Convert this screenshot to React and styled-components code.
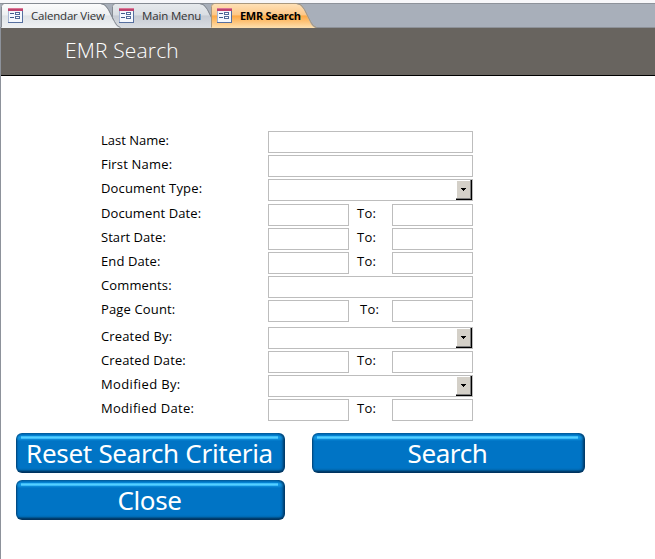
import React from 'react';
import styled, { createGlobalStyle, css } from 'styled-components';

const Global = createGlobalStyle`
  * { box-sizing: border-box; }
  body { margin: 0; background: #fff; overflow: hidden; }
`;

const Window = styled.main`
  width: 655px;
  height: 559px;
  display: flex;
  flex-direction: column;
  border-left: 1px solid #8d929b;
  background: #fff;
  font-family: 'Open Sans', 'Noto Sans', sans-serif;
  color: #000;
`;

const TabBar = styled.nav`
  height: 28px;
  flex: none;
  display: flex;
  margin-left: -1px;
  padding-left: 1px;
  border-top: 3px solid #f7f7fa;
  background: linear-gradient(#8d929a 0 1px, #a8afba 1px 24px, #8d9198 24px);
`;

const Tab = styled.div`
  position: relative;
  z-index: ${(p) => p.$level};
  width: ${(p) => p.$width}px;
  height: 25px;
  display: flex;
  padding: 5px 0 0 ${(p) => p.$pad}px;
  flex: none;
`;

const TabShape = styled.svg`
  position: absolute;
  left: 0;
  top: 0;
  overflow: visible;
`;

const FormIcon = styled.svg`
  position: relative;
  flex: none;
  width: 15px;
  height: 15px;
`;

const TabLabel = styled.span`
  position: relative;
  margin: -1px 0 0 ${(p) => p.$gap}px;
  font-size: 11.5px;
  line-height: 17px;
  white-space: nowrap;
  color: #333;
  letter-spacing: ${(p) => p.$spacing}px;
  ${(p) => p.$active && css`
    color: #000;
    font-size: 11px;
    font-weight: 700;
  `}
`;

const Header = styled.header`
  height: 48px;
  flex: none;
  padding: 8px 0 0 64px;
  background: #68645f;
  border-bottom: 1px solid #000;
`;

const Title = styled.h1`
  margin: 0;
  font-size: 21px;
  font-weight: 300;
  line-height: 29px;
  letter-spacing: 0.15px;
  color: #fff;
`;

const Form = styled.form`
  display: flex;
  flex-direction: column;
  gap: 2px;
  padding: 55px 0 0 100px;
`;

const Row = styled.div`
  display: grid;
  grid-template-columns: 167px 205px;
  height: 22px;
  margin-top: ${(p) => p.$before || 0}px;
`;

const Label = styled.label`
  font-size: 13px;
  line-height: 18px;
  white-space: nowrap;
  letter-spacing: ${(p) => p.$spacing || 0}px;
`;

const Field = styled.input`
  width: 100%;
  height: 22px;
  border: 1px solid #bdbdbd;
  border-radius: 0;
  background: #fff;
  padding: 0 3px;
  outline: 0;
`;

const Range = styled.div`
  display: grid;
  grid-template-columns: 81px 43px 81px;
`;

const To = styled(Label)`
  padding-left: ${(p) => p.$inset}px;
`;

const Combo = styled.div`
  display: flex;
  justify-content: flex-end;
  height: 22px;
  border: 1px solid #bdbdbd;
`;

const DropButton = styled.button`
  width: 16px;
  height: 20px;
  padding: 0;
  display: flex;
  border: solid #000;
  border-width: 0 1px 1px 0;
  background: #d4d0c8;
  box-shadow: inset -1px -1px #808080, inset 1px 1px #fff;
`;

const Actions = styled.div`
  display: grid;
  grid-template-columns: 269px 273px;
  grid-auto-rows: 40px;
  gap: 7px 27px;
  padding: 12px 0 0 15px;
`;

const Action = styled.button`
  border: 0;
  padding: 0 2px 0 0;
  border-radius: 6px;
  color: #fff;
  font-family: 'Noto Sans', 'Open Sans', sans-serif;
  font-size: 26px;
  line-height: 40px;
  letter-spacing: ${(p) => p.$spacing}px;
  white-space: nowrap;
  background:
    linear-gradient(#2fb0f5, #55d0ff 50%, #2fb0f5) 5px 3px / calc(100% - 12px) 3px no-repeat,
    linear-gradient(#0063a8 0, #0079c8 2px, #139bea 4px, #0e8fdc 6px, #0074c5 8px, #0074c5 35px, #0067af 37px, #004678 38px, #002e55 40px);
  box-shadow: inset 2px 0 2px -1px #003f70, inset -3px 0 3px -1px #00335e;
`;

const tabStyles = {
  plain: { colors: ['#e6e9ec', '#dadee3', '#c6cbd3', '#d9dde2'], stroke: '#858a92' },
  first: { colors: ['#fbfbfc', '#eef0f2', '#dfe3e7', '#eff1f3'], stroke: '#858a92' },
  active: { colors: ['#fee0b6', '#fdc888', '#fda945', '#fee0b0'], stroke: '#a9987e' },
};

function DocumentTab({ id, kind, width, pad, gap, spacing, curve, level, active, children }) {
  const s = tabStyles[kind];
  const d = `M0 25V4Q0 1 3 1H${curve - 3}Q${curve + 2} 1 ${curve + 5} 7L${curve + 11} 19Q${curve + 13} 24 ${curve + 17} 25`;
  return (
    <Tab $width={width} $pad={pad} $level={level}>
      <TabShape width={width} height="25">
        <defs>
          <linearGradient id={id} x2="0" y2="1">
            <stop offset="0" stopColor={s.colors[0]} />
            <stop offset=".45" stopColor={s.colors[1]} />
            <stop offset=".5" stopColor={s.colors[2]} />
            <stop offset="1" stopColor={s.colors[3]} />
          </linearGradient>
        </defs>
        <path d={`${d}Z`} fill={`url(#${id})`} />
        <path d={d} transform="translate(.5 -.5)" fill="none" stroke={s.stroke} />
      </TabShape>
      <FormIcon viewBox="0 0 15 15" shapeRendering="crispEdges">
        <rect width="15" height="15" fill="#f5f8fd" />
        <path d="M0 3h1v12H0z" fill="#a9b8d6" />
        <path d="M14 3h1v12h-1zM0 14h15v1H0z" fill="#566f9f" />
        <path d="M0 0h15v3H0z" fill="#be436e" />
        <path d="M0 0h15v1H0z" fill="#dc7796" />
        <path d="M2 5h4v1H2zM2 9h4v1H2z" fill="#425b8c" />
        <path d="M7.500 4.500h4v2h-4zM7.500 8.500h4v2h-4z" fill="#fff" stroke="#536c9c" />
      </FormIcon>
      <TabLabel $gap={gap} $spacing={spacing} $active={active}>{children}</TabLabel>
    </Tab>
  );
}

const rows = [
  { label: 'Last Name:', kind: 'text' },
  { label: 'First Name:', kind: 'text', spacing: 0.18 },
  { label: 'Document Type:', kind: 'combo', spacing: 0.15 },
  { label: 'Document Date:', kind: 'range', before: 1, spacing: 0.1 },
  { label: 'Start Date:', kind: 'range', spacing: 0.05 },
  { label: 'End Date:', kind: 'range', spacing: 0.1 },
  { label: 'Comments:', kind: 'text', spacing: 0.12 },
  { label: 'Page Count:', kind: 'range', inset: 11, spacing: 0.15 },
  { label: 'Created By:', kind: 'combo', before: 3, spacing: 0.15 },
  { label: 'Created Date:', kind: 'range', spacing: 0.12 },
  { label: 'Modified By:', kind: 'combo', spacing: 0.35 },
  { label: 'Modified Date:', kind: 'range', spacing: 0.3 },
];

function Control({ row }) {
  if (row.kind === 'range') {
    return (
      <Range>
        <Field />
        <To $inset={row.inset || 8} $spacing={0.3}>To:</To>
        <Field />
      </Range>
    );
  }
  if (row.kind === 'combo') {
    return (
      <Combo>
        <DropButton type="button">
          <svg width="15" height="19" shapeRendering="crispEdges">
            <path d="M5 8h5v1H5zM6 9h3v1H6zM7 10h1v1H7z" />
          </svg>
        </DropButton>
      </Combo>
    );
  }
  return <Field />;
}

export default function App() {
  return (
    <Window>
      <Global />
      <TabBar>
        <DocumentTab id="tab-calendar" kind="first" width={111} pad={7} gap={8} spacing={-0.2} curve={102} level={2}>Calendar View</DocumentTab>
        <DocumentTab id="tab-main" kind="plain" width={99} pad={7} gap={8} spacing={-0.15} curve={90} level={1}>Main Menu</DocumentTab>
        <DocumentTab id="tab-emr" kind="active" width={110} pad={6} gap={8} spacing={-0.3} curve={88} level={3} active>EMR Search</DocumentTab>
      </TabBar>
      <Header><Title>EMR Search</Title></Header>
      <Form>
        {rows.map((row) => (
          <Row key={row.label} $before={row.before}>
            <Label $spacing={row.spacing}>{row.label}</Label>
            <Control row={row} />
          </Row>
        ))}
      </Form>
      <Actions>
        <Action $spacing={-0.3}>Reset Search Criteria</Action>
        <Action $spacing={-0.4}>Search</Action>
        <Action $spacing={-0.4}>Close</Action>
      </Actions>
    </Window>
  );
}
